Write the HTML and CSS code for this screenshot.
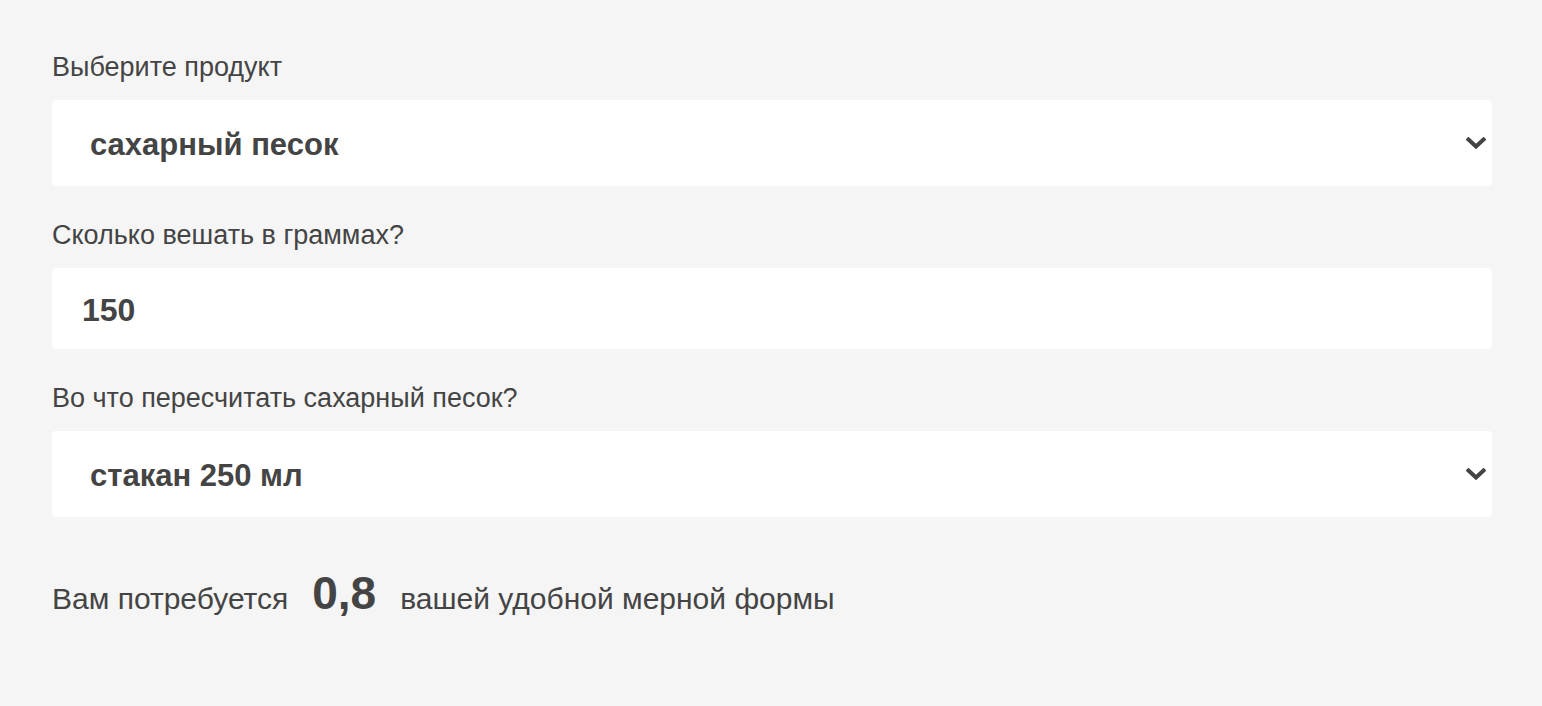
FILE: index.html
```html
<!DOCTYPE html>
<html lang="ru">
<head>
<meta charset="utf-8">
<link rel="stylesheet" href="styles.css">
</head>
<body>
<div class="calc">
  <label class="label" for="product">Выберите продукт</label>
  <div class="field select-wrap">
    <select id="product" class="control select">
      <option>сахарный песок</option>
    </select>
    <svg class="chevron" viewBox="0 0 20 12" width="20" height="12"><path d="M2.5 2.5 L10 9.5 L17.5 2.5" fill="none" stroke="#444" stroke-width="4" stroke-linecap="square"/></svg>
  </div>

  <label class="label" for="grams">Сколько вешать в граммах?</label>
  <div class="field">
    <input id="grams" class="control input" type="text" value="150">
  </div>

  <label class="label" for="measure">Во что пересчитать сахарный песок?</label>
  <div class="field select-wrap">
    <select id="measure" class="control select">
      <option>стакан 250 мл</option>
    </select>
    <svg class="chevron" viewBox="0 0 20 12" width="20" height="12"><path d="M2.5 2.5 L10 9.5 L17.5 2.5" fill="none" stroke="#444" stroke-width="4" stroke-linecap="square"/></svg>
  </div>

  <div class="result">
    <span class="result-text">Вам потребуется</span>
    <span class="result-value">0,8</span>
    <span class="result-text">вашей удобной мерной формы</span>
  </div>
</div>
</body>
</html>
```

FILE: styles.css
```css
html, body {
  margin: 0;
  padding: 0;
  background: #f5f5f5;
}
body {
  font-family: "Liberation Sans", Arial, sans-serif;
  color: #444;
}
.calc {
  width: 1440px;
  padding: 52px 0 0 52px;
  display: flex;
  flex-direction: column;
}
.label {
  display: block;
  font-size: 27px;
  line-height: 30px;
  margin: 0 0 18px;
  color: #444;
}
.field {
  position: relative;
  background: #fff;
  border-radius: 4px;
  margin-bottom: 34px;
}
.control {
  display: block;
  width: 100%;
  box-sizing: border-box;
  border: none;
  outline: none;
  background: transparent;
  font-family: "Liberation Sans", Arial, sans-serif;
  font-weight: bold;
  color: #444;
  margin: 0;
  -webkit-appearance: none;
  appearance: none;
}
.select {
  height: 86px;
  padding: 3px 60px 0 38px;
  font-size: 31px;
}
.input {
  height: 81px;
  padding: 3px 28px 0 30px;
  font-size: 32px;
}
.chevron {
  position: absolute;
  right: 6px;
  top: 50%;
  margin-top: -6px;
  pointer-events: none;
}
.result {
  display: flex;
  align-items: baseline;
  gap: 24px;
  margin-top: 19px;
}
.result-text {
  font-size: 30px;
  line-height: 1;
}
.result-value {
  font-size: 46px;
  font-weight: bold;
  line-height: 1;
}
```
